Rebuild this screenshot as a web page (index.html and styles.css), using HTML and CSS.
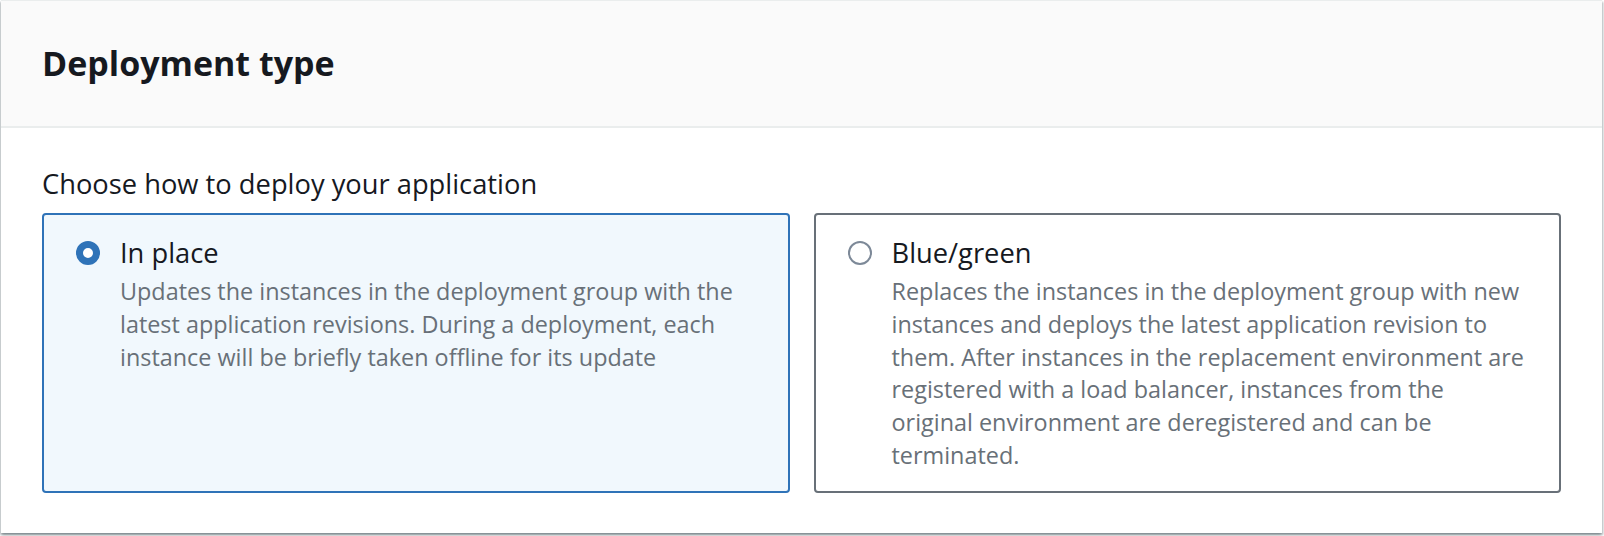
FILE: index.html
```html
<!DOCTYPE html>
<html lang="en">
<head>
<meta charset="utf-8">
<title>Deployment type</title>
<link rel="stylesheet" href="styles.css">
</head>
<body>
<section class="panel">
  <header class="panel-header">
    <h2 class="panel-title">Deployment type</h2>
  </header>
  <div class="panel-body">
    <div class="field-label">Choose how to deploy your application</div>
    <div class="tiles">
      <label class="tile tile-selected">
        <span class="radio radio-checked"></span>
        <span class="tile-text">
          <span class="tile-label">In place</span>
          <span class="tile-desc">Updates the instances in the deployment group with the latest application revisions. During a deployment, each instance will be briefly taken offline for its update</span>
        </span>
      </label>
      <label class="tile">
        <span class="radio"></span>
        <span class="tile-text">
          <span class="tile-label">Blue/green</span>
          <span class="tile-desc">Replaces the instances in the deployment group with new instances and deploys the latest application revision to them. After instances in the replacement environment are registered with a load balancer, instances from the original environment are deregistered and can be terminated.</span>
        </span>
      </label>
    </div>
  </div>
</section>
</body>
</html>
```

FILE: styles.css
```css
* { box-sizing: border-box; }
html, body { margin: 0; padding: 0; background: #ffffff; }
body {
  padding: 0 2px 3px 1px;
  font-family: "Open Sans", "Noto Sans", sans-serif;
  color: #16191f;
}
.panel {
  background: #ffffff;
  border-top: 1px solid #eaeded;
  box-shadow: 0 2px 2px 0 rgba(0, 28, 36, 0.3), 2px 2px 2px 0 rgba(0, 28, 36, 0.15), -2px 2px 2px 0 rgba(0, 28, 36, 0.15);
}
.panel-header {
  background: #fafafa;
  border-bottom: 2px solid #eaeded;
  padding: 39px 41px 40px;
}
.panel-title {
  margin: 0;
  font-size: 34px;
  line-height: 46px;
  font-weight: 700;
  color: #16191f;
}
.panel-body {
  padding: 36px 41px 40px;
}
.field-label {
  font-size: 27.3px;
  line-height: 40px;
  margin-bottom: 9px;
  color: #16191f;
}
.tiles {
  display: grid;
  grid-template-columns: 1fr 1fr;
  gap: 24px;
}
.tile {
  display: flex;
  gap: 20px;
  align-items: flex-start;
  border: 2px solid #687078;
  border-radius: 4px;
  padding: 18px 32px 19px;
  min-height: 280px;
  background: #ffffff;
}
.tile-selected {
  border-color: #2f73b8;
  background: #f1f8fd;
}
.radio {
  flex: 0 0 auto;
  width: 24px;
  height: 24px;
  margin-top: 8px;
  border-radius: 50%;
  border: 2px solid #7d8998;
  background: #ffffff;
}
.radio-checked {
  border: 7px solid #2f73b8;
}
.tile-text {
  display: flex;
  flex-direction: column;
}
.tile-label {
  font-size: 27.3px;
  line-height: 40px;
  margin-bottom: 2px;
  color: #16191f;
}
.tile-desc {
  font-size: 23.4px;
  line-height: 32.8px;
  color: #687078;
}
```
